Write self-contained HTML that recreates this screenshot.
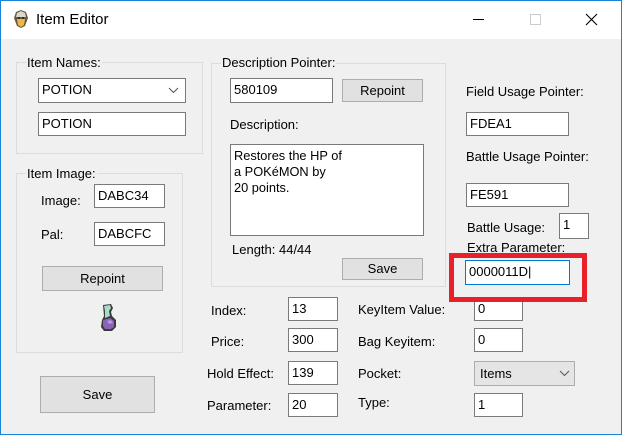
<!DOCTYPE html>
<html><head><meta charset="utf-8"><style>
*{box-sizing:border-box;margin:0;padding:0}
body{width:622px;height:435px;background:#f0f0f0;font-family:"Liberation Sans",Arial,sans-serif;font-size:13px;color:#000;position:relative;overflow:hidden}
.a{position:absolute}
.frame{left:0;top:0;width:622px;height:435px;border:1px solid #1883d7}
.title{left:1px;top:1px;width:620px;height:38px;background:#fff}
.grp{position:absolute;border:1px solid #dcdcdc}
.lbl{position:absolute;white-space:nowrap;line-height:15px}
.glbl{position:absolute;white-space:nowrap;line-height:15px;background:#f0f0f0;padding:0 1px}
.tb{position:absolute;background:#fff;border:1px solid #7a7a7a;padding:3px 0 0 3px;line-height:16px;white-space:nowrap}
.btn{position:absolute;background:#e1e1e1;border:1px solid #adadad;text-align:center;white-space:nowrap}
.cb{position:absolute;border:1px solid #adadad;background:#e5e5e5}
</style></head><body>
<div class="a title"></div>
<svg class="a" style="left:12px;top:9px" width="18" height="20" viewBox="0 0 18 20">
<path d="M4 3 L9 1 L14 3 L16 9 L13 17 L9 19 L5 17 L2 9 Z" fill="#6a5a3a"/>
<path d="M5 4 L9 2 L13 4 L14 8 L4 8 Z" fill="#d8d8d0"/>
<path d="M5 10 L13 10 L12 16 L9 18 L6 16 Z" fill="#e8b84a"/>
<circle cx="7" cy="9" r="1" fill="#222"/><circle cx="11" cy="9" r="1" fill="#222"/>
</svg>
<div class="lbl" style="left:36px;top:11px;font-size:15px;line-height:18px">Item Editor</div>
<div class="a" style="left:473px;top:19px;width:11px;height:1px;background:#000"></div>
<div class="a" style="left:530px;top:14px;width:11px;height:11px;border:1px solid #ccc"></div>
<svg class="a" style="left:585px;top:13px" width="13" height="13"><path d="M1 1 L12 12 M12 1 L1 12" stroke="#000" stroke-width="1.1"/></svg>

<div class="grp" style="left:16px;top:62px;width:187px;height:92px"></div>
<div class="glbl" style="left:26px;top:55px">Item Names:</div>
<div class="tb" style="left:38px;top:78px;width:148px;height:25px">POTION</div>
<svg class="a" style="left:168px;top:87px" width="11" height="7"><path d="M1 1 L5.5 5.5 L10 1" stroke="#555" fill="none"/></svg>
<div class="tb" style="left:38px;top:112px;width:148px;height:24px">POTION</div>

<div class="grp" style="left:16px;top:173px;width:167px;height:180px"></div>
<div class="glbl" style="left:26px;top:166px">Item Image:</div>
<div class="lbl" style="left:41px;top:193px">Image:</div>
<div class="tb" style="left:94px;top:184px;width:71px;height:24px">DABC34</div>
<div class="lbl" style="left:41px;top:227px">Pal:</div>
<div class="tb" style="left:94px;top:222px;width:71px;height:24px">DABCFC</div>
<div class="btn" style="left:42px;top:266px;width:121px;height:25px;line-height:23px">Repoint</div>
<svg class="a" style="left:97px;top:302px" width="24" height="30" viewBox="0 0 24 30">
<path d="M6 3 L14 2 L16 6 L14 10 L15 14 L19 18 L19 25 L15 29 L7 29 L4 25 L5 18 L7 14 Z" fill="#3a3a3a"/>
<path d="M7 4 L13 3 L14 6 L12 9 L13 14 L8 16 L8 9 Z" fill="#a8dcc8"/>
<path d="M6 18 L13 16 L17 19 L17 25 L14 27 L8 27 L6 24 Z" fill="#8a62b8"/>
<path d="M10 19 L14 18 L16 21 L12 22 Z" fill="#b896e0"/>
</svg>
<div class="btn" style="left:40px;top:376px;width:115px;height:37px;line-height:35px">Save</div>

<div class="grp" style="left:211px;top:63px;width:235px;height:224px"></div>
<div class="glbl" style="left:221px;top:55px">Description Pointer:</div>
<div class="tb" style="left:230px;top:78px;width:103px;height:25px">580109</div>
<div class="btn" style="left:342px;top:79px;width:81px;height:23px;line-height:21px">Repoint</div>
<div class="lbl" style="left:230px;top:117px">Description:</div>
<div class="tb" style="left:230px;top:144px;width:194px;height:92px;font-size:12.8px;line-height:16px;padding-top:3px;white-space:pre">Restores the HP of
a POKéMON by
20 points.</div>
<div class="lbl" style="left:232px;top:242px">Length: 44/44</div>
<div class="btn" style="left:342px;top:258px;width:81px;height:22px;line-height:20px">Save</div>

<div class="lbl" style="left:466px;top:84px">Field Usage Pointer:</div>
<div class="tb" style="left:466px;top:112px;width:103px;height:24px">FDEA1</div>
<div class="lbl" style="left:466px;top:149px">Battle Usage Pointer:</div>
<div class="tb" style="left:466px;top:183px;width:103px;height:24px">FE591</div>
<div class="lbl" style="left:467px;top:220px">Battle Usage:</div>
<div class="tb" style="left:559px;top:213px;width:30px;height:26px">1</div>
<div class="lbl" style="left:467px;top:240px">Extra Parameter:</div>
<div class="tb" style="left:474px;top:297px;width:49px;height:24px">0</div>
<div class="tb" style="left:465px;top:260px;width:105px;height:25px;border-color:#0078d7;padding-top:3px">0000011D|</div>
<div class="a" style="left:449px;top:253px;width:138px;height:49px;border:5px solid #e8202a"></div>

<div class="lbl" style="left:211px;top:303px">Index:</div>
<div class="tb" style="left:288px;top:297px;width:50px;height:24px">13</div>
<div class="lbl" style="left:211px;top:334px">Price:</div>
<div class="tb" style="left:288px;top:328px;width:50px;height:24px">300</div>
<div class="lbl" style="left:207px;top:366px">Hold Effect:</div>
<div class="tb" style="left:288px;top:361px;width:50px;height:24px">139</div>
<div class="lbl" style="left:207px;top:398px">Parameter:</div>
<div class="tb" style="left:288px;top:393px;width:50px;height:24px">20</div>

<div class="lbl" style="left:358px;top:302px">KeyItem Value:</div>
<div class="lbl" style="left:358px;top:334px">Bag Keyitem:</div>
<div class="tb" style="left:474px;top:328px;width:49px;height:24px">0</div>
<div class="lbl" style="left:358px;top:366px">Pocket:</div>
<div class="cb" style="left:474px;top:361px;width:101px;height:25px;padding:4px 0 0 5px">Items</div>
<svg class="a" style="left:559px;top:370px" width="11" height="7"><path d="M1 1 L5.5 5.5 L10 1" stroke="#555" fill="none"/></svg>
<div class="lbl" style="left:358px;top:395px">Type:</div>
<div class="tb" style="left:474px;top:393px;width:49px;height:24px">1</div>

<div class="a frame"></div>
</body></html>
